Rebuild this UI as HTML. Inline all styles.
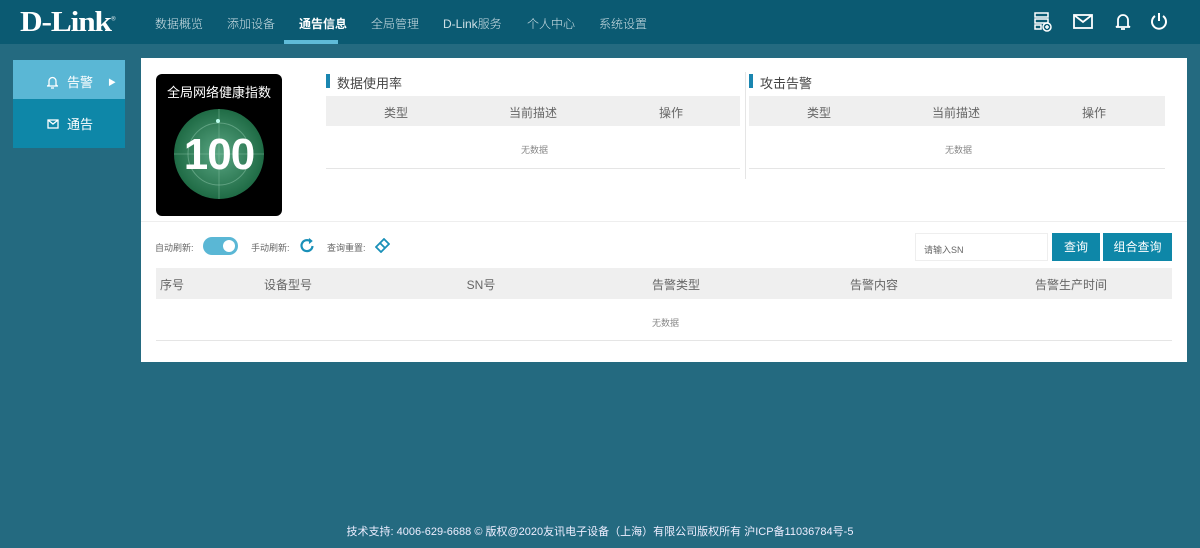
<!DOCTYPE html>
<html><head><meta charset="utf-8"><style>
*{margin:0;padding:0;box-sizing:border-box}
body{width:1200px;height:548px;background:#246a80;font-family:"Liberation Sans","Noto Sans CJK SC",sans-serif;position:relative;overflow:hidden;color:#555}
.hdr{position:absolute;left:0;top:0;width:1200px;height:44px;background:#0b5a72}
.logo{position:absolute;left:20px;top:9px;color:#fff;font:bold 28px "Liberation Serif",serif;letter-spacing:-1px;transform:scaleX(1.12);transform-origin:left top;line-height:1}
.nav{position:absolute;top:0;left:0;height:44px}
.nav span{position:absolute;top:15px;font-size:12px;color:#cfe0e6;white-space:nowrap;font-weight:300}
.nav .act{color:#fff;font-weight:bold}
.bar{position:absolute;left:284px;top:40px;width:54px;height:4px;background:#5fbbd8}
.ico{position:absolute;top:12px}
.side{position:absolute;left:13px;top:60px;width:112px;height:88px;background:#0e87a8}
.side .a{height:39px;background:#5ab7d5;color:#fff;font-size:13px;line-height:45px;padding-left:34px;position:relative}
.side .b{height:49px;color:#fff;font-size:13px;line-height:52px;padding-left:34px;position:relative}
.panel{position:absolute;left:141px;top:58px;width:1046px;height:304px;background:#fff}
.card{position:absolute;left:15px;top:16px;width:126px;height:142px;background:#000;border-radius:6px;color:#fff;text-align:center}
.t{position:absolute;font-size:13px;color:#444}
.mk{position:absolute;width:4px;height:14px;background:#1a86b0}
.th{position:absolute;height:30px;background:#efefef;font-size:12px;color:#666}
.th span{position:absolute;top:8px;transform:translateX(-50%)}
.nod{position:absolute;font-size:9px;color:#888}
.ln{position:absolute;height:1px;background:#e5e5e5}
.small{position:absolute;font-size:9px;color:#666}
.btn{position:absolute;top:175px;height:28px;background:#0e87a8;color:#fff;font-size:12px;text-align:center;line-height:28px}
.foot{position:absolute;left:0;width:1200px;top:523px;text-align:center;color:#eef;font-size:11px}
</style></head><body>
<div class="hdr">
<div class="logo">D-Link<sup style="font-size:6px;font-weight:normal">®</sup></div>
<div class="nav">
<span style="left:155px">数据概览</span><span style="left:227px">添加设备</span><span class="act" style="left:299px">通告信息</span><span style="left:371px">全局管理</span><span style="left:443px">D-Link服务</span><span style="left:527px">个人中心</span><span style="left:599px">系统设置</span>
</div>
<div class="bar"></div>
<svg class="ico" style="left:1034px" width="18" height="20" viewBox="0 0 18 20" fill="none" stroke="#fff" stroke-width="1.5"><rect x="1" y="1" width="13" height="4"/><rect x="1" y="7" width="13" height="4"/><path d="M1 13h6v4H1z"/><circle cx="13" cy="15" r="4"/><path d="M13 13v4M11 15h4"/></svg>
<svg class="ico" style="left:1073px;top:14px" width="20" height="15" viewBox="0 0 20 15" fill="none" stroke="#fff" stroke-width="1.8"><rect x="1" y="1" width="18" height="13"/><path d="M1 1l9 7 9-7"/></svg>
<svg class="ico" style="left:1115px" width="16" height="19" viewBox="0 0 16 19" fill="none" stroke="#fff" stroke-width="1.8"><path d="M3 14V8a5 5 0 0110 0v6l2 1H1z"/><path d="M6 17h4"/></svg>
<svg class="ico" style="left:1150px" width="18" height="19" viewBox="0 0 18 19" fill="none" stroke="#fff" stroke-width="2"><path d="M5 4a7 7 0 108 0"/><path d="M9 1v8"/></svg>
</div>
<div class="side">
<div class="a"><svg style="position:absolute;left:34px;top:16px" width="11" height="13" viewBox="0 0 11 13" fill="none" stroke="#fff" stroke-width="1.3"><path d="M2 9V5a3.5 3.5 0 017 0v4l1.5 1h-10z"/><path d="M4 12h3"/></svg><span style="padding-left:20px">告警</span><span style="position:absolute;left:95px;top:0;font-size:8px">▶</span></div>
<div class="b"><svg style="position:absolute;left:34px;top:20px" width="12" height="10" viewBox="0 0 12 10" fill="none" stroke="#fff" stroke-width="1.3"><rect x="1" y="1" width="10" height="8"/><path d="M1 1l5 4 5-4"/></svg><span style="padding-left:20px">通告</span></div>
</div>
<div class="panel">
<div class="card"><div style="padding-top:8px;font-size:13px">全局网络健康指数</div>
<svg style="position:absolute;left:17px;top:34px" width="92" height="92" viewBox="0 0 92 92"><defs><radialGradient id="g"><stop offset="0" stop-color="#5aa683"/><stop offset="1" stop-color="#1f6b45"/></radialGradient></defs><circle cx="46" cy="46" r="45" fill="url(#g)"/><circle cx="46" cy="46" r="31" fill="none" stroke="#8fc7ab" stroke-opacity=".5"/><path d="M46 1v90M1 46h90" stroke="#8fc7ab" stroke-opacity=".4"/><circle cx="45" cy="13" r="2" fill="#bfe"/></svg>
<div style="position:absolute;left:0;width:126px;top:56px;font:bold 44px 'Liberation Sans',sans-serif;color:#fff;letter-spacing:-1px">100</div></div>
<div class="mk" style="left:185px;top:16px"></div><div class="t" style="left:196px;top:15px">数据使用率</div>
<div class="mk" style="left:608px;top:16px"></div><div class="t" style="left:619px;top:15px">攻击告警</div>
<div class="th" style="left:185px;top:38px;width:414px"><span style="left:70px">类型</span><span style="left:207px">当前描述</span><span style="left:345px">操作</span></div>
<div class="th" style="left:608px;top:38px;width:416px"><span style="left:70px">类型</span><span style="left:207px">当前描述</span><span style="left:345px">操作</span></div>
<div class="nod" style="left:380px;top:85px">无数据</div><div class="nod" style="left:804px;top:85px">无数据</div>
<div class="ln" style="left:185px;top:110px;width:414px"></div><div class="ln" style="left:608px;top:110px;width:416px"></div>
<div style="position:absolute;left:604px;top:14px;width:1px;height:107px;background:#e5e5e5"></div>
<div class="ln" style="left:0;top:163px;width:1046px;background:#eee"></div>
<div class="small" style="left:14px;top:183px">自动刷新:</div>
<div style="position:absolute;left:62px;top:179px;width:35px;height:18px;border-radius:9px;background:#5ab7d5"><div style="position:absolute;right:3px;top:3px;width:12px;height:12px;border-radius:6px;background:#fff"></div></div>
<div class="small" style="left:110px;top:183px">手动刷新:</div>
<svg style="position:absolute;left:159px;top:180px" width="15" height="15" viewBox="0 0 15 15" fill="none" stroke="#1a90b8" stroke-width="2.2"><path d="M12.5 8A5.5 5.5 0 1110 3"/><path d="M9 0.5l3 2.5-3 2.5" fill="#1a90b8" stroke-width="1"/></svg>
<div class="small" style="left:186px;top:183px">查询重置:</div>
<svg style="position:absolute;left:234px;top:180px" width="15" height="15" viewBox="0 0 15 15" fill="none" stroke="#1a90b8" stroke-width="1.8"><path d="M9 1l5 5-4 4-5-5zM5 5l-4 4 5 5 4-4M3 11l2 2"/></svg>
<div style="position:absolute;left:774px;top:175px;width:133px;height:28px;border:1px solid #eee;font-size:9px;color:#666;padding:9px 8px">请输入SN</div>
<div class="btn" style="left:911px;width:48px">查询</div><div class="btn" style="left:962px;width:69px">组合查询</div>
<div class="th" style="left:15px;top:210px;width:1016px;height:31px"><span style="left:4px;transform:none">序号</span><span style="left:108px;transform:none">设备型号</span><span style="left:325px">SN号</span><span style="left:520px">告警类型</span><span style="left:718px">告警内容</span><span style="left:915px">告警生产时间</span></div>
<div class="nod" style="left:511px;top:258px">无数据</div>
<div class="ln" style="left:15px;top:282px;width:1016px"></div>
</div>
<div class="foot">技术支持: 4006-629-6688 © 版权@2020友讯电子设备（上海）有限公司版权所有 沪ICP备11036784号-5</div>
</body></html>
